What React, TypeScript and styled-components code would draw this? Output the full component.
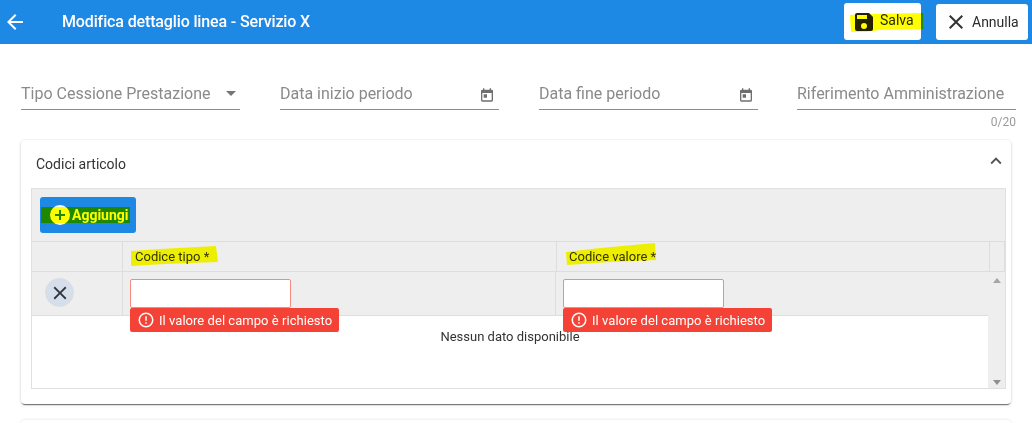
import React from "react";
import styled, { createGlobalStyle } from "styled-components";

const Global = createGlobalStyle`
  html, body { margin: 0; padding: 0; height: 423px; overflow: hidden; background: #fff; }
  body { font-family: Roboto, "Liberation Sans", sans-serif; }
  * { box-sizing: border-box; }
`;

const Page = styled.div`
  position: relative;
  width: 1032px;
  height: 423px;
  overflow: hidden;
`;
const Header = styled.header`
  height: 44px;
  background: #1e88e5;
  display: flex;
  align-items: center;
  padding: 0 4px 0 3px;
  color: #fff;
`;
const Title = styled.h1`
  margin: 0 0 0 35px;
  flex: 1;
  font-size: 16px;
  font-weight: 500;
  line-height: 44px;
  letter-spacing: -0.135px;
`;
const HeaderBtn = styled.button<{ $w: number; $h: number; $mt: number; $mr?: number }>`
  width: ${(p) => p.$w}px;
  height: ${(p) => p.$h}px;
  margin-right: ${(p) => p.$mr ?? 0}px;
  margin-top: ${(p) => p.$mt}px;
  background: #fff;
  border: 0;
  border-radius: 3px;
  display: flex;
  align-items: center;
  padding: 0 0 0 8px;
  gap: 4px;
  font: 400 14px Roboto, sans-serif;
  color: #2b2b2b;
`;
const BtnLabel = styled.span<{ $up: number }>`
  margin-bottom: ${(p) => p.$up}px;
`;
const Fields = styled.div`
  display: grid;
  grid-template-columns: repeat(4, 219px);
  column-gap: 40px;
  padding: 28px 0 0 21px;
  height: 96px;
`;
const Field = styled.div`
  height: 38px;
  border-bottom: 1px solid #8c8c8c;
  display: flex;
  align-items: center;
  justify-content: space-between;
  color: #8a8a8a;
  font-size: 16px;
  position: relative;
  padding-top: 5px;
  &:last-child { margin: 0 1px 0 -1px; }
`;
const FieldIcon = styled.span`
  display: flex;
  margin: 3px 4px 0 0;
`;
const Counter = styled.span`
  position: absolute;
  right: 0;
  top: 43px;
  font-size: 12px;
  color: #9a9a9a;
  line-height: 14px;
`;
const Card = styled.section`
  margin: 0 21px;
  height: 264px;
  border-radius: 4px;
  background: #fff;
  box-shadow: 0 2px 1px -1px rgba(0,0,0,.5), 0 1px 3px 0 rgba(0,0,0,.18), 0 0 2px rgba(0,0,0,.08);
  padding: 0 5px 0 10px;
`;
const CardHead = styled.div`
  height: 48px;
  display: flex;
  align-items: center;
  justify-content: space-between;
  padding: 0 0 0 5px;
  font-size: 14px;
  color: #333;
`;
const Chevron = styled.span`
  display: flex;
  margin: -6px -1px 0 0;
`;
const Grid = styled.div`
  border: 1px solid #e0e0e0;
  height: 201px;
  display: flex;
  flex-direction: column;
`;
const Toolbar = styled.div`
  height: 53px;
  background: #eee;
  border-bottom: 1px solid #ddd;
  padding: 8px;
  flex: none;
`;
const AddBtn = styled.button`
  width: 96px;
  height: 36px;
  background: #1e88e5;
  color: #fff;
  border: 0;
  border-radius: 3px;
  display: flex;
  align-items: center;
  padding: 0 0 0 8px;
  font: 700 14px Roboto, sans-serif;
`;
const HeadRow = styled.div`
  height: 30px;
  flex: none;
  background: #eee;
  border-bottom: 1px solid #ddd;
  display: grid;
  grid-template-columns: 91px 434px 433px 1fr;
  font-size: 13px;
  color: #333;
`;
const HeadCell = styled.div`
  border-right: 1px solid #ddd;
  padding-left: 12px;
  line-height: 29px;
`;
const Body = styled.div`
  flex: 1;
  display: flex;
  min-height: 0;
`;
const RowArea = styled.div`
  flex: 1;
  min-width: 0;
  display: flex;
  flex-direction: column;
`;
const DataRow = styled.div`
  height: 44px;
  flex: none;
  background: #eee;
  border-bottom: 1px solid #ddd;
  display: grid;
  grid-template-columns: 91px 433px 1fr;
`;
const DataCell = styled.div`
  border-right: 1px solid #ddd;
  padding: 7px 0 0 7px;
  position: relative;
  &:last-child { border-right: 0; }
`;
const RemoveCell = styled(DataCell)`
  padding: 6px 0 0 13px;
`;
const RoundBtn = styled.button`
  width: 29px;
  height: 29px;
  padding: 0;
  border-radius: 50%;
  border: 1px solid #ddd;
  background: #d5dfeb;
  display: flex;
  align-items: center;
  justify-content: center;
`;
const Input = styled.input`
  display: block;
  width: 161px;
  height: 29px;
  background: #fff;
  border: 1px solid #f28b82;
  border-radius: 2px;
  outline: 0;
`;
const ErrorTip = styled.div`
  position: absolute;
  left: 7px;
  top: 36px;
  z-index: 2;
  width: 209px;
  height: 24px;
  background: #f44336;
  border-radius: 2px;
  color: #fff;
  font-size: 13px;
  letter-spacing: 0.04px;
  display: flex;
  align-items: center;
  gap: 4px;
  padding-left: 7px;
  white-space: nowrap;
`;
const Empty = styled.div`
  flex: 1;
  background: #fff;
  text-align: center;
  font-size: 13px;
  color: #333;
  padding-top: 13px;
  line-height: 16px;
`;
const Scroll = styled.div`
  width: 17px;
  flex: none;
  background: #eee;
  display: flex;
  flex-direction: column;
  align-items: center;
  justify-content: space-between;
  padding: 6px 0 3px;
`;
const Arrow = styled.span<{ $up?: boolean }>`
  width: 0;
  height: 0;
  border-left: 4px solid transparent;
  border-right: 4px solid transparent;
  ${(p) => (p.$up ? "border-bottom: 5px solid #a6a6a6;" : "border-top: 5px solid #8f8f8f;")}
`;
const NextCard = styled.section`
  margin: 16px 21px 0;
  height: 40px;
  border-radius: 4px;
  background: #fff;
  box-shadow: 0 0 3px rgba(0,0,0,.14);
`;
const Marker = styled.svg`
  position: absolute;
  left: 0;
  top: 0;
  width: 1032px;
  height: 423px;
  pointer-events: none;
  mix-blend-mode: multiply;
  z-index: 5;
`;

const Ico = ({ d, size = 24, color = "currentColor" }: { d: string; size?: number; color?: string }) => (
  <svg width={size} height={size} viewBox="0 0 24 24" fill={color} style={{ flex: "none" }}>
    <path d={d} />
  </svg>
);
const ARROW = "M20 11H7.83l5.59-5.59L12 4l-8 8 8 8 1.41-1.41L7.83 13H20v-2z";
const SAVE = "M15 9H5V5h10m-3 14a3 3 0 0 1-3-3 3 3 0 0 1 3-3 3 3 0 0 1 3 3 3 3 0 0 1-3 3m5-16H5a2 2 0 0 0-2 2v14a2 2 0 0 0 2 2h14a2 2 0 0 0 2-2V7l-4-4z";
const CLOSE = "M19 6.41 17.59 5 12 10.59 6.41 5 5 6.41 10.59 12 5 17.59 6.41 19 12 13.41 17.59 19 19 17.59 13.41 12z";
const CAL = "M19 4h-1V2h-2v2H8V2H6v2H5a2 2 0 0 0-2 2v14a2 2 0 0 0 2 2h14a2 2 0 0 0 2-2V6a2 2 0 0 0-2-2zm0 16H5V9h14v11zM7 11h5v5H7z";
const CHEV = "M7.41 15.41 12 10.83l4.59 4.58L18 14l-6-6-6 6z";
const PLUS = "M12 2a10 10 0 1 0 0 20 10 10 0 0 0 0-20zm5 11h-4v4h-2v-4H7v-2h4V7h2v4h4v2z";
const ALERT = "M11 15h2v2h-2zm0-8h2v6h-2zm1-5a10 10 0 1 0 0 20 10 10 0 0 0 0-20zm0 18a8 8 0 1 1 0-16 8 8 0 0 1 0 16z";

const Caret = styled.span`
  width: 0;
  height: 0;
  margin-right: 4px;
  border-left: 5px solid transparent;
  border-right: 5px solid transparent;
  border-top: 5px solid #757575;
`;

const Err = () => (
  <ErrorTip>
    <Ico d={ALERT} size={18} />
    Il valore del campo è richiesto
  </ErrorTip>
);

export default function App() {
  return (
    <Page>
      <Global />
      <Header>
        <Ico d={ARROW} />
        <Title>Modifica dettaglio linea - Servizio X</Title>
        <HeaderBtn $w={77} $h={37} $mt={-1} $mr={15}>
          <Ico d={SAVE} color="#222" />
          <BtnLabel $up={3}>Salva</BtnLabel>
        </HeaderBtn>
        <HeaderBtn $w={92} $h={36} $mt={0}>
          <Ico d={CLOSE} size={24} color="#333" />
          <BtnLabel $up={1}>Annulla</BtnLabel>
        </HeaderBtn>
      </Header>
      <Fields>
        <Field>Tipo Cessione Prestazione<Caret /></Field>
        <Field>Data inizio periodo<FieldIcon><Ico d={CAL} size={16} color="#6f6f6f" /></FieldIcon></Field>
        <Field>Data fine periodo<FieldIcon><Ico d={CAL} size={16} color="#6f6f6f" /></FieldIcon></Field>
        <Field>Riferimento Amministrazione<Counter>0/20</Counter></Field>
      </Fields>
      <Card>
        <CardHead>
          Codici articolo
          <Chevron><Ico d={CHEV} size={22} color="#555" /></Chevron>
        </CardHead>
        <Grid>
          <Toolbar>
            <AddBtn>
              <Ico d={PLUS} size={24} />
              Aggiungi
            </AddBtn>
          </Toolbar>
          <HeadRow>
            <HeadCell />
            <HeadCell>Codice tipo *</HeadCell>
            <HeadCell>Codice valore *</HeadCell>
            <HeadCell />
          </HeadRow>
          <Body>
            <RowArea>
              <DataRow>
                <RemoveCell>
                  <RoundBtn><Ico d={CLOSE} size={22} color="#2f3640" /></RoundBtn>
                </RemoveCell>
                <DataCell><Input /><Err /></DataCell>
                <DataCell><Input /><Err /></DataCell>
              </DataRow>
              <Empty>Nessun dato disponibile</Empty>
            </RowArea>
            <Scroll><Arrow $up /><Arrow /></Scroll>
          </Body>
        </Grid>
      </Card>
      <NextCard />
      <Marker viewBox="0 0 1032 423" fill="#ffff00">
        <polygon points="850,15 866,14 923,13 923,29 880,30 866,32 851,32" />
        <polygon points="41,207 130,207 130,223 41,223" />
        <polygon points="131,251 160,249 216,246 218,262 165,264 131,266" />
        <polygon points="566,252 600,248 655,243 656,260 610,262 567,265" />
      </Marker>
    </Page>
  );
}
